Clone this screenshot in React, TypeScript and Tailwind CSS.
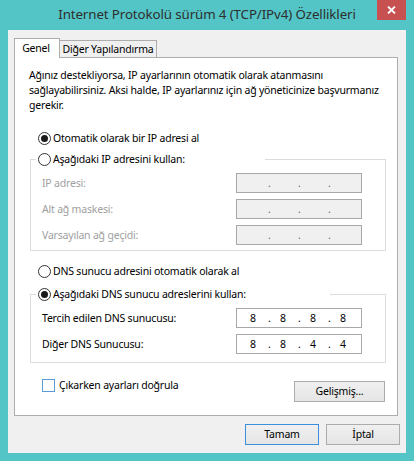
import React from "react";

function Radio({ checked }: { checked?: boolean }) {
  return (
    <span className="w-[13px] h-[13px] rounded-full border border-[#333333] bg-white flex items-center justify-center shrink-0">
      {checked && <span className="w-[7px] h-[7px] rounded-full bg-[#1a1a1a]" />}
    </span>
  );
}

function IpBox({ values, disabled }: { values: string[]; disabled?: boolean }) {
  return (
    <div
      className={
        disabled
          ? "w-[126px] h-[20px] border border-[#a8a8a8] bg-[#f0f0f0] flex items-center pl-[1px] text-[#6d6d6d]"
          : "w-[126px] h-[20px] border border-[#a8a8a8] bg-white flex items-center pl-[1px] text-black"
      }
    >
      {values.map((v, i) => (
        <React.Fragment key={i}>
          <span className="w-[30px] text-center shrink-0">{v}</span>
          {i < 3 && <span className="w-0 whitespace-nowrap shrink-0">.</span>}
        </React.Fragment>
      ))}
    </div>
  );
}

function Row({ label, values, disabled }: { label: string; values: string[]; disabled?: boolean }) {
  return (
    <div className="flex items-center h-[20px]">
      <span className={disabled ? "flex-1 pl-[11px] text-[#a0a0a0] whitespace-nowrap" : "flex-1 pl-[11px] text-black whitespace-nowrap"}>
        {label}
      </span>
      <div className="mr-[23px]">
        <IpBox values={values} disabled={disabled} />
      </div>
    </div>
  );
}

export default function App() {
  return (
    <div className="w-[414px] h-[461px] bg-[#53c5c6] flex flex-col font-['Noto_Sans',sans-serif] text-[10.5px] tracking-[-0.2px] leading-[15px] text-black">
      {/* Title bar */}
      <div className="h-[30px] grid grid-cols-[1fr_auto_1fr]">
        <div />
        <div className="flex items-center text-[13.3px] tracking-[-0.1px] text-[#2e2e2e] whitespace-nowrap pb-[1px]">
          Internet Protokolü sürüm 4 (TCP/IPv4) Özellikleri
        </div>
        <div className="flex justify-end items-start pr-[8px]">
          <div className="w-[29px] h-[20px] bg-[#c75050] flex items-center justify-center">
            <svg width="9" height="8" viewBox="0 0 9 8">
              <path d="M1 0.5 L8 7.5 M8 0.5 L1 7.5" stroke="white" strokeWidth="1.8" fill="none" />
            </svg>
          </div>
        </div>
      </div>

      {/* Client area */}
      <div className="mx-[8px] mb-[8px] flex-1 bg-[#f0f0f0] pt-[8px] pl-[6px] pr-[8px] flex flex-col">
        {/* Tabs */}
        <div className="flex items-end h-[19px]">
          <div className="relative z-10 w-[46px] h-[20px] -mb-[1px] bg-white border-l border-t border-r border-[#adadad] flex items-center justify-center pr-[2px]">
            Genel
          </div>
          <div className="w-[98px] h-[17px] -ml-[1px] bg-[#f0f0f0] border-l border-t border-r border-[#adadad] flex items-center justify-center">
            Diğer Yapılandırma
          </div>
        </div>

        {/* Panel */}
        <div className="w-[384px] h-[359px] border border-[#adadad] bg-white pl-[14px] pr-[11px] pt-[10px] flex flex-col">
          <p className="whitespace-nowrap">
            Ağınız destekliyorsa, IP ayarlarının otomatik olarak atanmasını
            <br />
            sağlayabilirsiniz. Aksi halde, IP ayarlarınız için ağ yöneticinize başvurmanız
            <br />
            gerekir.
          </p>

          <div className="mt-[18px] ml-[9px] h-[15px] flex items-center gap-[2px]">
            <Radio checked />
            <span>Otomatik olarak bir IP adresi al</span>
          </div>

          <fieldset className="mt-[6px] ml-[1px] border border-[#dcdcdc]">
            <legend className="ml-[5px] w-[229px] h-[15px] pl-[2px] flex items-center gap-[2px]">
              <Radio />
              <span>Aşağıdaki IP adresini kullan:</span>
            </legend>
            <div className="pt-[6px] pb-[5px] flex flex-col gap-[6px]">
              <Row label="IP adresi:" values={["", "", "", ""]} disabled />
              <Row label="Alt ağ maskesi:" values={["", "", "", ""]} disabled />
              <Row label="Varsayılan ağ geçidi:" values={["", "", "", ""]} disabled />
            </div>
          </fieldset>

          <div className="mt-[13px] ml-[9px] h-[15px] flex items-center gap-[2px]">
            <Radio />
            <span>DNS sunucu adresini otomatik olarak al</span>
          </div>

          <fieldset className="mt-[8px] ml-[1px] border border-[#dcdcdc]">
            <legend className="ml-[5px] w-[294px] h-[15px] pl-[2px] flex items-center gap-[2px]">
              <Radio checked />
              <span>Aşağıdaki DNS sunucu adreslerini kullan:</span>
            </legend>
            <div className="pt-[6px] pb-[8px] flex flex-col gap-[6px]">
              <Row label="Tercih edilen DNS sunucusu:" values={["8", "8", "8", "8"]} />
              <Row label="Diğer DNS Sunucusu:" values={["8", "8", "4", "4"]} />
            </div>
          </fieldset>

          <div className="mt-[16px] flex items-start">
            <div className="ml-[13px] flex-1 flex items-center h-[13px] gap-[4px]">
              <span className="w-[13px] h-[13px] border border-[#5b9bd5] bg-white shrink-0" />
              <span>Çıkarken ayarları doğrula</span>
            </div>
            <button className="mt-[2px] mr-[1px] w-[91px] h-[21px] border border-[#acacac] bg-gradient-to-b from-[#f0f0f0] to-[#e5e5e5] flex items-center justify-center">
              Gelişmiş...
            </button>
          </div>
        </div>

        {/* Buttons */}
        <div className="mt-[8px] -mr-[2px] flex justify-end gap-[7px]">
          <button className="w-[74px] h-[21px] border border-[#3c8ddb] bg-gradient-to-b from-[#f0f0f0] to-[#e5e5e5] flex items-center justify-center">
            Tamam
          </button>
          <button className="w-[74px] h-[21px] border border-[#acacac] bg-gradient-to-b from-[#f0f0f0] to-[#e5e5e5] flex items-center justify-center">
            İptal
          </button>
        </div>
      </div>
    </div>
  );
}
